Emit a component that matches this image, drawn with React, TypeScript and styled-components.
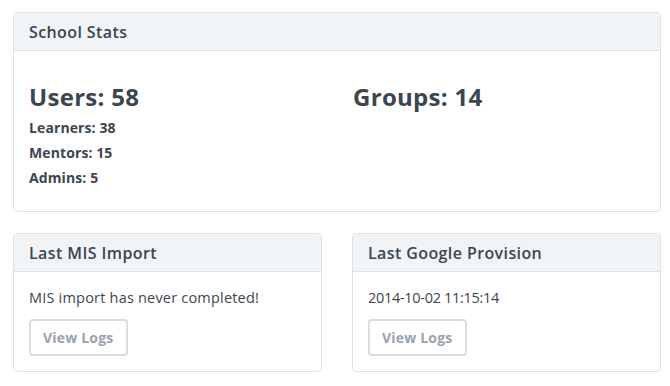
import React from "react";
import styled, { createGlobalStyle } from "styled-components";

const Global = createGlobalStyle`
  html, body { margin: 0; padding: 0; background: #ffffff; }
  body { font-family: "Open Sans", Lato, sans-serif; color: #3b4650; }
`;

const Page = styled.div`
  padding: 12px 9px 0 13px;
  display: flex;
  flex-direction: column;
  gap: 21px;
`;

const Row = styled.div`
  display: grid;
  grid-template-columns: 1fr 1fr;
  gap: 30px;
`;

const Card = styled.section`
  border: 1px solid #dde2e6;
  border-radius: 4px;
  background: #fff;
  overflow: hidden;
`;

const CardHeader = styled.header`
  height: 37px;
  background: #f0f4f7;
  border-bottom: 1px solid #dde2e6;
  display: flex;
  align-items: center;
  padding: 0 15px;
  font-size: 16px;
  font-weight: 600;
  letter-spacing: 0.4px;
`;

const StatsBody = styled.div`
  padding: 32px 15px 17px;
  display: grid;
  grid-template-columns: 1fr 1fr;
  height: 111px;
`;

const StatCol = styled.div<{ $offset?: number }>`
  padding-left: ${(p) => p.$offset ?? 0}px;
`;

const BigStat = styled.h2`
  margin: 0 0 4px;
  font-size: 24px;
  line-height: 28px;
  font-weight: 700;
  letter-spacing: 0.3px;
`;

const SubStat = styled.p`
  margin: 0;
  font-size: 14px;
  line-height: 25px;
  font-weight: 700;
  letter-spacing: 0.1px;
`;

const Body = styled.div`
  padding: 16px 15px 15px;
  display: flex;
  flex-direction: column;
  align-items: flex-start;
  gap: 11px;
`;

const Text = styled.p<{ $spacing?: number }>`
  margin: 0;
  font-size: 14.5px;
  line-height: 20px;
  letter-spacing: ${(p) => p.$spacing ?? 0.2}px;
`;

const Button = styled.button`
  font-family: inherit;
  height: 37px;
  padding: 0 12px;
  border: 2px solid #d8dde2;
  border-radius: 4px;
  background: #fff;
  color: #9aa3ab;
  font-size: 14px;
  font-weight: 700;
  letter-spacing: 0.2px;
`;

export default function App() {
  return (
    <>
      <Global />
      <Page>
        <Card>
          <CardHeader>School Stats</CardHeader>
          <StatsBody>
            <StatCol>
              <BigStat>Users: 58</BigStat>
              <SubStat>Learners: 38</SubStat>
              <SubStat>Mentors: 15</SubStat>
              <SubStat>Admins: 5</SubStat>
            </StatCol>
            <StatCol $offset={16}>
              <BigStat>Groups: 14</BigStat>
            </StatCol>
          </StatsBody>
        </Card>
        <Row>
          <Card>
            <CardHeader>Last MIS Import</CardHeader>
            <Body>
              <Text>MIS import has never completed!</Text>
              <Button>View Logs</Button>
            </Body>
          </Card>
          <Card>
            <CardHeader>Last Google Provision</CardHeader>
            <Body>
              <Text $spacing={-0.3}>2014-10-02 11:15:14</Text>
              <Button>View Logs</Button>
            </Body>
          </Card>
        </Row>
      </Page>
    </>
  );
}
